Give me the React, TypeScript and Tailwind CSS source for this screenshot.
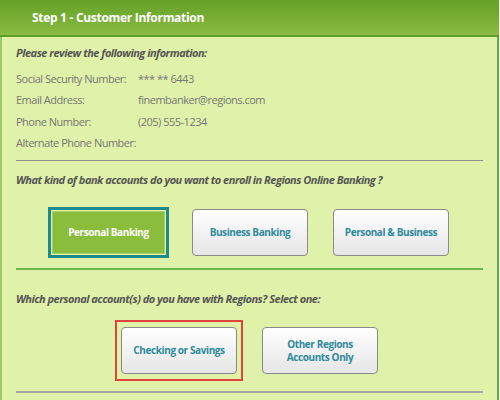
import React from "react";

const rows = [
  { label: "Social Security Number:", value: "*** ** 6443" },
  { label: "Email Address:", value: "finembanker@regions.com" },
  { label: "Phone Number:", value: "(205) 555-1234" },
  { label: "Alternate Phone Number:", value: "" },
];

function OptionButton({ children, className = "" }: { children: React.ReactNode; className?: string }) {
  return (
    <button
      className={`flex h-[47px] w-[116px] items-center justify-center rounded-[4px] border border-[#8a8a8a] bg-gradient-to-b from-white to-[#e6e6e6] text-center text-[10px] leading-[13px] font-bold tracking-[-0.4px] text-[#2f8a9c] ${className}`}
    >
      {children}
    </button>
  );
}

export default function App() {
  return (
    <div
      className="h-[400px] w-[500px] overflow-hidden bg-white"
      style={{ fontFamily: '"Open Sans", "Liberation Sans", sans-serif' }}
    >
      <div className="w-[499px]">
        {/* Header bar */}
        <div className="flex h-[37px] items-center border-b-2 border-[#5c9e28] bg-gradient-to-b from-[#64a126] to-[#8bbb42] pl-[32px]">
          <h1 className="text-[12px] font-bold tracking-[-0.3px] text-white">Step 1 - Customer Information</h1>
        </div>

        <div className="h-[363px] border-r-2 border-l-2 border-r-[#5aae45] border-l-[#9cca6a] bg-[#e0f1a9] px-[14px]">
          <p className="pt-[7px] text-[11px] leading-[18px] font-bold italic tracking-[-0.5px] text-[#555]">
            Please review the following information:
          </p>
          <div className="mt-[6px] flex flex-col text-[11px] tracking-[-0.5px] text-[#777]">
            {rows.map((r) => (
              <div key={r.label} className="flex h-[21.5px] items-center whitespace-nowrap">
                <span className="w-[122px]">{r.label}</span>
                <span>{r.value}</span>
              </div>
            ))}
          </div>

          <div className="mt-[6px] h-px w-[467px] bg-[#8c8c8c]" />

          <p className="pt-[10px] text-[11px] leading-[18px] font-bold italic tracking-[-0.5px] text-[#555]">
            What kind of bank accounts do you want to enroll in Regions Online Banking ?
          </p>

          <div className="mt-[18px] flex items-center pl-[32px]">
            <div className="h-[51px] w-[121px] border-[3px] border-[#1f8a8c] p-px">
              <div className="flex h-full w-full items-center justify-center border border-[#a6d46a] bg-[#8bbd3c] text-[10px] font-bold tracking-[-0.4px] text-white">
                Personal Banking
              </div>
            </div>
            <OptionButton className="ml-[23px]">Business Banking</OptionButton>
            <OptionButton className="ml-[25px]">Personal &amp; Business</OptionButton>
          </div>

          <div className="mt-[10px] h-[2px] w-[467px] bg-[#6cb450]" />

          <p className="pt-[20px] text-[11px] leading-[18px] font-bold italic tracking-[-0.5px] text-[#555]">
            Which personal account(s) do you have with Regions? Select one:
          </p>

          <div className="mt-[12px] flex items-center pl-[99px]">
            <div className="border-2 border-[#e0443c] px-[4px] py-[5px]">
              <OptionButton>Checking or Savings</OptionButton>
            </div>
            <OptionButton className="ml-[19px]">
              Other Regions
              <br />
              Accounts Only
            </OptionButton>
          </div>

          <div className="mt-[10px] h-[2px] w-[467px] bg-[#a8a8a8]" />
        </div>
      </div>
    </div>
  );
}
